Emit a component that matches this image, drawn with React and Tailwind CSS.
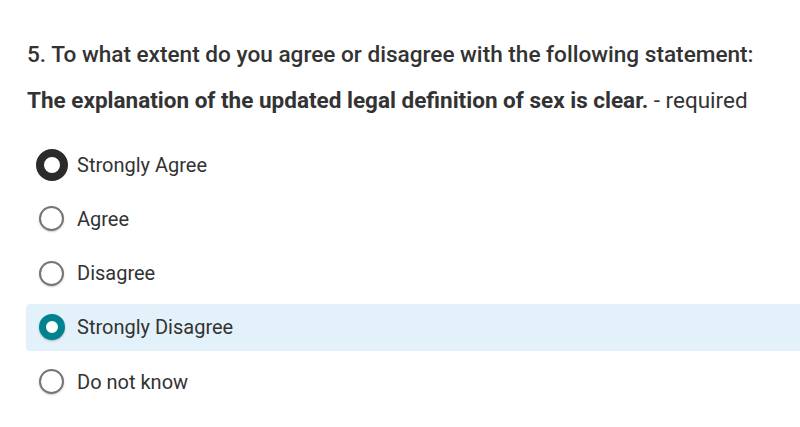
const options = [
  { label: "Strongly Agree", state: "focus" },
  { label: "Agree", state: "idle" },
  { label: "Disagree", state: "idle" },
  { label: "Strongly Disagree", state: "checked" },
  { label: "Do not know", state: "idle" },
];

function Radio({ state }) {
  if (state === "focus") {
    return <span className="block w-[32px] h-[32px] rounded-full border-[8px] border-[#2b2b2b] bg-white" />;
  }
  if (state === "checked") {
    return <span className="block w-[26px] h-[26px] rounded-full border-[7px] border-[#00838f] bg-white shadow-[0_1px_2px_rgba(0,0,0,0.25)]" />;
  }
  return <span className="block w-[25px] h-[25px] rounded-full border-2 border-[#757575] bg-white shadow-[0_1px_2px_rgba(0,0,0,0.2)]" />;
}

export default function App() {
  return (
    <div className="w-[800px] h-[427px] bg-white overflow-hidden font-['Roboto',sans-serif] text-[#333]">
      <div className="pl-[27px] pt-[40px]">
        <h2 className="text-[22.6px] font-medium leading-[30px] whitespace-nowrap">
          5. To what extent do you agree or disagree with the following statement:
        </h2>
        <p className="mt-[15px] text-[22.5px] leading-[30px] whitespace-nowrap">
          <span className="font-bold">The explanation of the updated legal definition of sex is clear.</span> - required
        </p>
      </div>
      <ul className="mt-[26px] pl-[26px] flex flex-col gap-[7.3px]">
        {options.map((o) => (
          <li
            key={o.label}
            className={`h-[47px] flex items-center rounded-l-[4px] ${o.state === "checked" ? "bg-[#e3f2fa]" : ""}`}
          >
            <span className="w-[51px] flex justify-center">
              <Radio state={o.state} />
            </span>
            <span className="text-[20px]">{o.label}</span>
          </li>
        ))}
      </ul>
    </div>
  );
}
